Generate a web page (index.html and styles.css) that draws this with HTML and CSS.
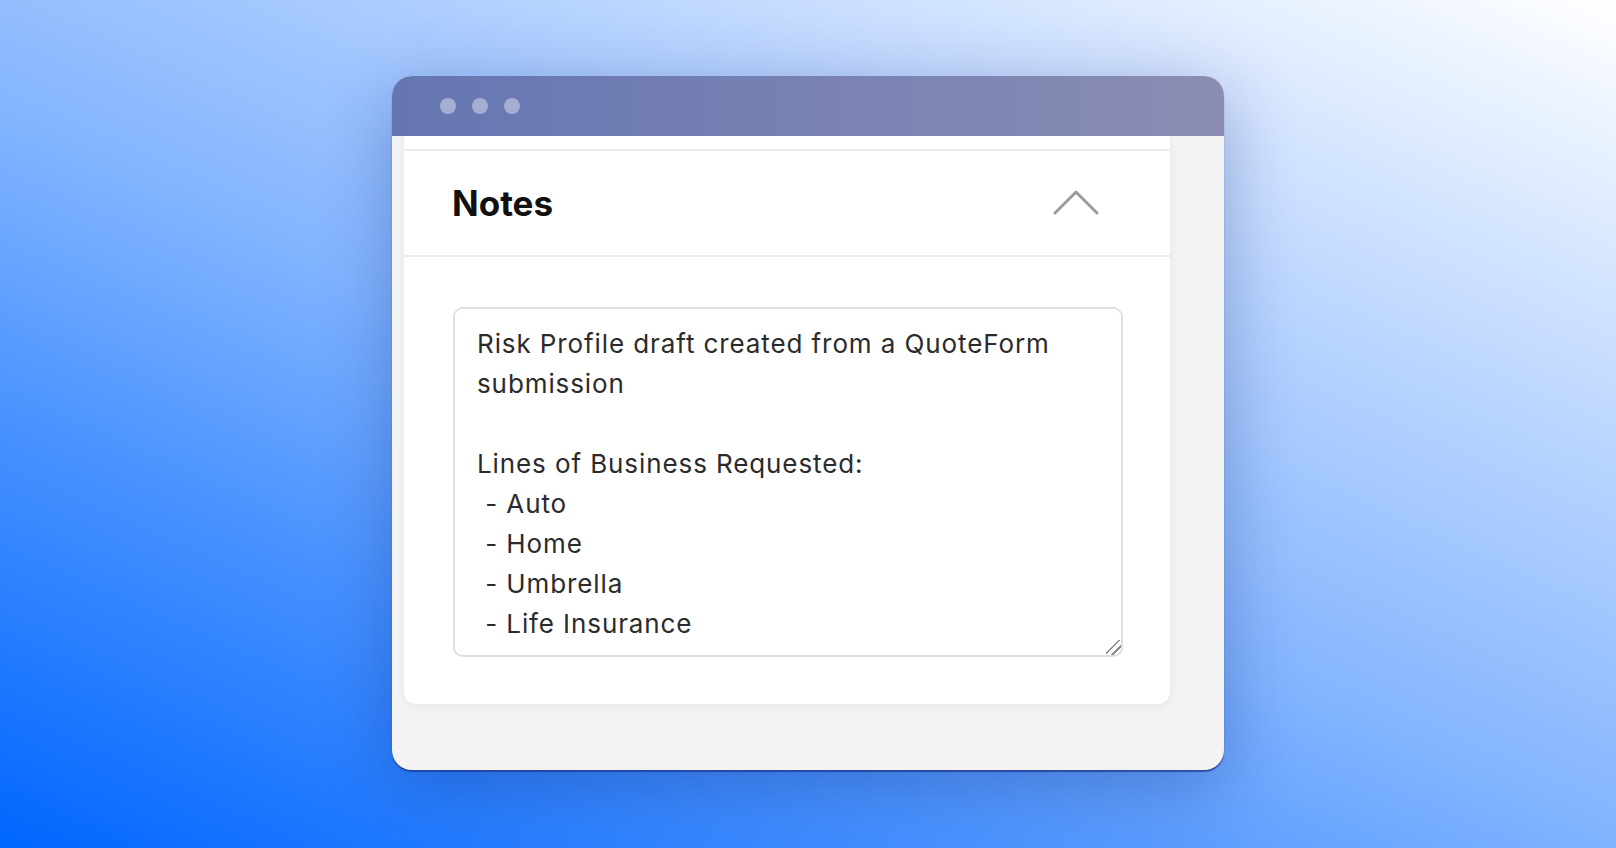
FILE: index.html
```html
<!DOCTYPE html>
<html lang="en">

<head>
    <meta charset="UTF-8">
    <meta name="viewport" content="width=device-width, initial-scale=1.0">
    <title>Notes</title>
    <link rel="stylesheet" href="styles.css">
</head>

<body>
    <div class="window">
        <!-- Window chrome -->
        <div class="titlebar">
            <span class="dot"></span>
            <span class="dot"></span>
            <span class="dot"></span>
        </div>

        <div class="window-body">
            <div class="card">
                <div class="card-prev"></div>
                <div class="card-header">
                    <h2>Notes</h2>
                    <button class="collapse-btn" aria-label="Collapse">
                        <svg width="46" height="26" viewBox="0 0 46 26" fill="none">
                            <path d="M2 23 L23 2 L44 23" stroke="#9b9b9b" stroke-width="3" stroke-linecap="round" stroke-linejoin="round" />
                        </svg>
                    </button>
                </div>
                <div class="card-body">
                    <textarea class="notes-input">Risk Profile draft created from a QuoteForm submission

Lines of Business Requested:
 - Auto
 - Home
 - Umbrella
 - Life Insurance</textarea>
                </div>
            </div>
        </div>
    </div>
</body>

</html>
```

FILE: styles.css
```css
body {
    margin: 0;
    height: 100vh;
    display: flex;
    justify-content: center;
    align-items: center;
    font-family: 'Inter', 'Noto Sans', sans-serif;
    background: linear-gradient(24deg, #0066ff 0%, #4a93ff 28%, #80b3ff 46%, #bcd6ff 72%, #ffffff 100%);
}

.window {
    width: 832px;
    height: 694px;
    margin-bottom: 2px;
    border-radius: 20px;
    overflow: hidden;
    display: flex;
    flex-direction: column;
    background-color: #f3f3f3;
    box-shadow: 0 2px 1px rgba(30, 50, 140, 0.7), 0 16px 70px rgba(0, 30, 110, 0.3);
}

.titlebar {
    height: 60px;
    flex-shrink: 0;
    display: flex;
    align-items: center;
    gap: 16px;
    padding-left: 48px;
    background: linear-gradient(90deg, #6576b2, #8b8db3);
}

.dot {
    width: 16px;
    height: 16px;
    border-radius: 50%;
    background-color: rgba(255, 255, 255, 0.4);
}

.window-body {
    flex: 1;
    overflow: hidden;
    padding: 0 52px 0 10px;
}

.card {
    background-color: #ffffff;
    border: 2px solid #ededed;
    border-top: none;
    border-radius: 0 0 14px 14px;
    box-shadow: 0 2px 6px rgba(0, 0, 0, 0.04);
}

.card-prev {
    height: 13px;
    border-bottom: 2px solid #ececec;
}

.card-header {
    height: 104px;
    display: flex;
    align-items: center;
    justify-content: space-between;
    padding: 0 71px 0 48px;
    border-bottom: 2px solid #ececec;
}

.card-header h2 {
    margin: 0;
    font-size: 35px;
    font-weight: 700;
    color: #111111;
}

.collapse-btn {
    border: none;
    background: none;
    padding: 0;
    display: flex;
    cursor: pointer;
}

.card-body {
    padding: 50px 47px 47px 49px;
}

.notes-input {
    display: block;
    width: 100%;
    height: 350px;
    box-sizing: border-box;
    margin: 0;
    padding: 15px 22px;
    border: 2px solid #dcdee2;
    border-radius: 10px;
    font-family: 'Inter', 'Noto Sans', sans-serif;
    font-size: 26px;
    line-height: 40px;
    letter-spacing: 0.9px;
    color: #2b2b2b;
    background-color: #ffffff;
    outline: none;
}

/* two diagonal grip lines like the macOS handle */
.notes-input::-webkit-resizer {
    background: linear-gradient(135deg, transparent 0 42%, #8c8c8c 42% 50%, transparent 50% 66%, #8c8c8c 66% 74%, transparent 74%);
}
```
